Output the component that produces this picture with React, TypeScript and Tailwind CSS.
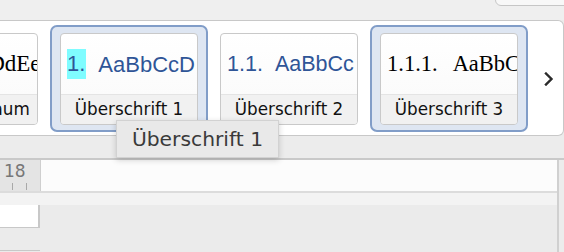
import React from "react";

const SANS = "font-['DejaVu_Sans',sans-serif]";

function Card({
  selected,
  label,
  children,
}: {
  selected?: boolean;
  label: string;
  children: React.ReactNode;
}) {
  return (
    <div
      className={
        "w-[158px] h-[107px] shrink-0 rounded-[7px] border-2 pt-[6px] pb-[5px] px-[8px] " +
        (selected ? "border-[#819dc8] bg-[#dee6f2]" : "border-transparent")
      }
    >
      <div className="h-full flex flex-col rounded-[4px] border border-[#c9c9c9] overflow-hidden bg-gradient-to-b from-white to-[#f9f9f9]">
        <div className="h-[60px] flex items-center pl-[6px] pr-[3px] overflow-hidden whitespace-nowrap">
          {children}
        </div>
        <div
          className={
            "flex-1 flex items-center justify-center bg-[#f1f1f1] border-t border-[#e4e4e4] text-[16.8px] text-[#111] whitespace-nowrap pt-[1px] " +
            SANS
          }
        >
          {label}
        </div>
      </div>
    </div>
  );
}

export default function App() {
  return (
    <div className="relative w-[564px] h-[252px] overflow-hidden bg-[#ebebeb] flex flex-col">
      {/* top bar */}
      <div className="relative h-[20px] bg-[#efefef] shrink-0">
        <div className="absolute right-[-4px] top-[-2px] w-[73px] h-[8px] bg-[#f8f8f8] border border-[#c6c6c6] rounded-bl-[6px]" />
      </div>

      {/* ribbon panel */}
      <div className="h-[116px] w-[564px] shrink-0 bg-white border-y border-r border-[#c8c8c8] rounded-r-[6px] flex items-start pt-[4px] overflow-hidden">
        <div className="flex items-start gap-[2px] ml-[-110px]">
          <Card label="Kein Leerraum">
            <span className="font-['Liberation_Serif',serif] text-[23px] text-black ml-[2px]">
              AaBbCcDdEe
            </span>
          </Card>
          <Card selected label="Überschrift 1">
            <span className="font-['Liberation_Sans',sans-serif] text-[22px] text-[#2f5597] flex items-center">
              <span className="inline-block bg-[#7ffcff] leading-[30px] pr-[1px]">1.</span>
              <span className="ml-[12px]">AaBbCcD</span>
            </span>
          </Card>
          <Card label="Überschrift 2">
            <span className="font-['Liberation_Sans',sans-serif] text-[21.5px] text-[#2f5597] flex items-center">
              <span>1.1.</span>
              <span className="ml-[12px]">AaBbCc</span>
            </span>
          </Card>
          <Card selected label="Überschrift 3">
            <span className="font-['Liberation_Serif',serif] text-[22.5px] text-black flex items-center">
              <span>1.1.1.</span>
              <span className="ml-[15px]">AaBbCc</span>
            </span>
          </Card>
          <div className="h-[107px] flex items-center ml-[14px]">
            <svg width="10" height="14" viewBox="0 0 10 14">
              <polyline
                points="2,1.5 7.5,7 2,12.5"
                fill="none"
                stroke="#2b2b2b"
                strokeWidth="2.4"
                strokeLinecap="square"
              />
            </svg>
          </div>
        </div>
      </div>

      {/* gray band */}
      <div className="h-[22px] shrink-0 bg-[#ececec]" />

      {/* document area */}
      <div className="flex-1 flex border-t-2 border-[#c9c9c9]">
        <div className="flex-1 flex flex-col">
          {/* ruler */}
          <div className="h-[31px] flex shrink-0">
            <div className="w-[41px] bg-[#e4e4e4] border-r border-[#cfcfcf] relative">
              <span className={"absolute left-[4px] top-[1px] text-[17px] text-[#777] leading-[20px] " + SANS}>
                18
              </span>
              <div className="absolute left-[12px] top-[23px] w-px h-[7px] bg-[#a8a8a8]" />
              <div className="absolute left-[26px] top-[23px] w-px h-[7px] bg-[#a8a8a8]" />
            </div>
            <div className="flex-1 bg-[#fcfcfc]" />
          </div>
          <div className="h-[2px] bg-[#dcdcdc] shrink-0" />
          <div className="h-[12px] bg-[#f3f3f3] shrink-0" />
          <div className="flex-1 bg-[#ebebeb] flex flex-col">
            <div className="w-[40px] h-[23px] bg-white border-r-2 border-b border-[#c8c8c8]" />
            <div className="w-[40px] h-[1px] mt-[22px] bg-[#c8c8c8]" />
          </div>
        </div>
        <div className="w-[7px] border-l-2 border-[#d0d0d0] bg-[#ececec]" />
      </div>

      {/* tooltip */}
      <div
        className={
          "absolute left-[116px] top-[120px] w-[163px] h-[38px] bg-[#e9e9e9] border border-[#d2d2d2] shadow-[0_2px_6px_rgba(0,0,0,0.18)] flex items-center justify-center text-[20.3px] text-[#3a3a3a] " +
          SANS
        }
      >
        Überschrift 1
      </div>
    </div>
  );
}
